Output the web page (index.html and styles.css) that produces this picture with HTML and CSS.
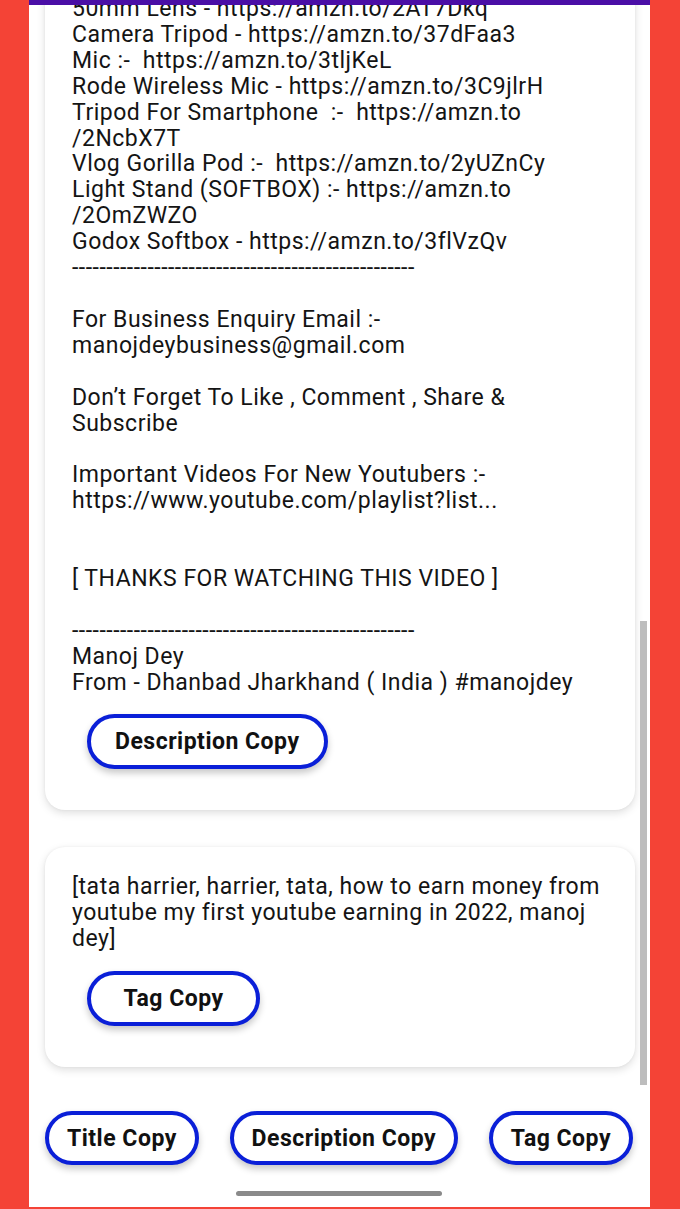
FILE: index.html
```html
<!DOCTYPE html>
<html>
<head>
<meta charset="utf-8">
<link rel="stylesheet" href="styles.css">
</head>
<body>
<div class="phone">
  <div class="appbar"></div>
  <div class="scroll">
    <div class="content">
      <div class="card card-desc">
<div class="text">50mm Lens - https://amzn.to/2AT7Dkq
Camera Tripod - https://amzn.to/37dFaa3
Mic :-  https://amzn.to/3tljKeL
Rode Wireless Mic - https://amzn.to/3C9jlrH
Tripod For Smartphone  :-  https://amzn.to
/2NcbX7T
Vlog Gorilla Pod :-  https://amzn.to/2yUZnCy
Light Stand (SOFTBOX) :- https://amzn.to
/2OmZWZO
Godox Softbox - https://amzn.to/3flVzQv
--------------------------------------------------

For Business Enquiry Email :-
manojdeybusiness@gmail.com

Don’t Forget To Like , Comment , Share &amp;
Subscribe

Important Videos For New Youtubers :-
https://www.youtube.com/playlist?list...


[ THANKS FOR WATCHING THIS VIDEO ]

--------------------------------------------------
Manoj Dey
From - Dhanbad Jharkhand ( India ) #manojdey</div>
        <button class="btn btn-card">Description Copy</button>
      </div>
      <div class="card card-tag">
<div class="text">[tata harrier, harrier, tata, how to earn money from
youtube my first youtube earning in 2022, manoj
dey]</div>
        <button class="btn btn-card btn-tag">Tag Copy</button>
      </div>
    </div>
    <div class="scrollbar"></div>
  </div>
  <div class="actions">
    <button class="btn btn-bottom">Title Copy</button>
    <button class="btn btn-bottom">Description Copy</button>
    <button class="btn btn-bottom">Tag Copy</button>
  </div>
  <div class="home-indicator"></div>
</div>
</body>
</html>
```
FILE: styles.css
```css
html, body {
  margin: 0;
  padding: 0;
  background: #f44336;
}

body {
  width: 680px;
  height: 1209px;
  overflow: hidden;
  font-family: Roboto, "Liberation Sans", sans-serif;
}

.phone {
  margin: 0 30px 0 29px;
  height: 1207px;
  background: #ffffff;
  display: flex;
  flex-direction: column;
}

.appbar {
  height: 5px;
  background: #4a0ea6;
  flex: none;
}

.scroll {
  height: 1080px;
  flex: none;
  overflow: hidden;
  position: relative;
}

.content {
  margin-top: -36px;
  padding: 0 15px 0 16px;
  display: flex;
  flex-direction: column;
  gap: 37px;
}

.card {
  background: #ffffff;
  border-radius: 20px;
  box-shadow: 0 3px 9px rgba(0, 0, 0, 0.13), 0 0 3px rgba(0, 0, 0, 0.05);
  padding: 27px 20px 41px 27px;
  display: flex;
  flex-direction: column;
  align-items: flex-start;
}

.text {
  white-space: pre;
  font-size: 23px;
  letter-spacing: 0.5px;
  line-height: 25.9px;
  color: #141414;
  margin-bottom: 19px;
}

.btn {
  font-family: Roboto, "Liberation Sans", sans-serif;
  font-weight: 700;
  font-size: 23px;
  letter-spacing: 0.5px;
  color: #111111;
  background: #ffffff;
  border: 4px solid #0a1fd8;
  border-radius: 28px;
  height: 55px;
  box-sizing: border-box;
  box-shadow: 0 4px 7px rgba(0, 0, 0, 0.22);
  display: flex;
  align-items: center;
  justify-content: center;
}

.btn-card {
  margin-left: 15px;
  padding: 0 24px;
  min-width: 173px;
}

.actions {
  padding: 26px 17px 0 16px;
  display: flex;
  justify-content: space-between;
}

.btn-bottom {
  height: 54px;
  padding: 0 18px;
}

.scrollbar {
  position: absolute;
  right: 3px;
  bottom: 0;
  width: 7px;
  height: 464px;
  background: #bdbdbd;
}

.home-indicator {
  width: 206px;
  height: 5px;
  border-radius: 3px;
  background: #8a8a8a;
  margin: 26px auto 0 auto;
  position: relative;
  left: -1px;
}
```
